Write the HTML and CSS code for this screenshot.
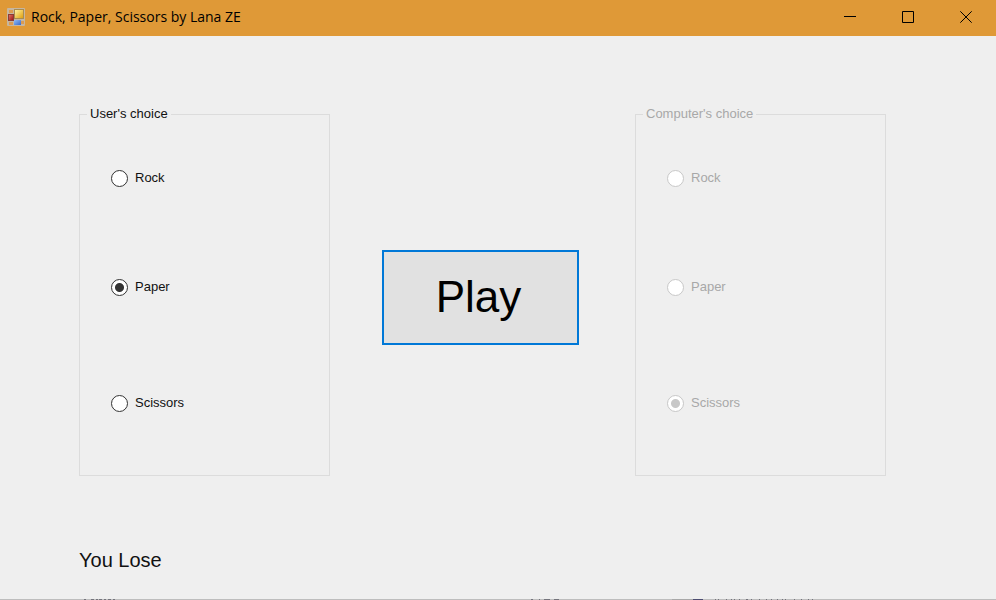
FILE: index.html
```html
<!DOCTYPE html>
<html lang="en">
<head>
<meta charset="utf-8">
<meta name="viewport" content="width=device-width, initial-scale=1">
<title>Rock, Paper, Scissors by Lana ZE</title>
<link rel="stylesheet" href="styles.css">
</head>
<body>
<header class="titlebar">
  <svg class="app-icon" viewBox="0 0 18 18" aria-hidden="true">
    <defs>
      <linearGradient id="gold" x1="0" y1="0" x2="1" y2="1"><stop offset="0" stop-color="#fff3a0"/><stop offset="1" stop-color="#e0a010"/></linearGradient>
      <linearGradient id="red" x1="0" y1="0" x2="1" y2="1"><stop offset="0" stop-color="#e07060"/><stop offset="1" stop-color="#a01818"/></linearGradient>
      <linearGradient id="blue" x1="0" y1="0" x2="1" y2="1"><stop offset="0" stop-color="#90bcf8"/><stop offset="1" stop-color="#3868c8"/></linearGradient>
    </defs>
    <rect width="18" height="18" rx="1" fill="#c6b6a0"/>
    <path d="M2 2h4v3H2zM2 14h4v3H2zM14 13h3v3h-3z" fill="#dc9b50"/>
    <rect x="7" y="1" width="10" height="10" fill="#a88c50"/>
    <rect x="8" y="2" width="8" height="8" fill="url(#gold)"/>
    <rect x="1" y="6" width="6" height="7" fill="#8c3c34"/>
    <rect x="2" y="7" width="4" height="5" fill="url(#red)"/>
    <rect x="7" y="12" width="7" height="5" fill="url(#blue)"/>
  </svg>
  <h1 class="title">Rock, Paper, Scissors by Lana ZE</h1>
  <div class="window-buttons">
    <button class="window-button" type="button" aria-label="Minimize"><svg viewBox="0 0 12 12"><path d="M0 5.5h12"/></svg></button>
    <button class="window-button" type="button" aria-label="Maximize"><svg viewBox="0 0 12 12"><path d="M.5.5h11v11H.5z"/></svg></button>
    <button class="window-button" type="button" aria-label="Close"><svg viewBox="0 0 12 12"><path d="M.3.3l11.4 11.4M11.7.3L.3 11.7"/></svg></button>
  </div>
</header>
<main class="game">
  <form class="board">
    <fieldset class="choices">
      <legend>User's choice</legend>
      <label class="choice"><input type="radio" name="user" value="rock">Rock</label>
      <label class="choice"><input type="radio" name="user" value="paper" checked>Paper</label>
      <label class="choice"><input type="radio" name="user" value="scissors">Scissors</label>
    </fieldset>
    <button class="play" type="button">Play</button>
    <fieldset class="choices" disabled>
      <legend>Computer's choice</legend>
      <label class="choice"><input type="radio" name="computer" value="rock">Rock</label>
      <label class="choice"><input type="radio" name="computer" value="paper">Paper</label>
      <label class="choice"><input type="radio" name="computer" value="scissors" checked>Scissors</label>
    </fieldset>
  </form>
  <p class="result">You Lose</p>
</main>
<footer class="edge">
  <svg viewBox="0 0 996 1" preserveAspectRatio="none" aria-hidden="true">
    <path d="M672 .5h21" stroke="#a8a8a8"/>
    <path d="M693 .5h10" stroke="#4c4c70"/>
    <path d="M84 .5h2m5 0h3m2 0h2m1 0h3m2 0h2m2 0h3m2 0h2M531 .5h2m6 0h1m4 0h6m4 0h5M715 .5h1m2 0h1m7 0h1m4 0h1m2 0h1m4 0h1m6 0h2m3 0h1m7 0h1m6 0h1m4 0h1m5 0h1m4 0h1m2 0h1m8 0h1m6 0h1m6 0h1m3 0h1" stroke="#74747c"/>
  </svg>
</footer>
</body>
</html>
```
FILE: styles.css
```css
* {
  box-sizing: border-box;
}

body {
  margin: 0;
  min-height: 100vh;
  display: flex;
  flex-direction: column;
  background: #efefef;
  color: #111;
  font: 13px/20px "Liberation Sans", Arial, sans-serif;
}

.titlebar {
  display: flex;
  align-items: center;
  height: 36px;
  padding: 0 1px 2px 7px;
  background: #df9937;
  color: #000;
}

.app-icon {
  width: 18px;
  height: 18px;
  margin-right: 6px;
}

.title {
  flex: 1;
  margin: 0;
  font: 14px/20px "Open Sans", "Noto Sans", sans-serif;
}

.window-buttons {
  display: flex;
  align-self: stretch;
}

.window-button {
  display: flex;
  align-items: center;
  justify-content: center;
  width: 58px;
  padding: 0;
  border: 0;
  background: none;
}

.window-button svg {
  width: 12px;
  height: 12px;
  fill: none;
  stroke: #000;
}

.game {
  flex: 1;
  padding: 68px 110px 0 79px;
}

.board {
  display: grid;
  grid-template-columns: 251fr 52fr 197fr 56fr 251fr;
}

.choices {
  grid-column: 1;
  min-width: 0;
  margin: 0;
  padding: 44px 31px 62px;
  border: 1px solid #dcdcdc;
  display: flex;
  flex-direction: column;
  gap: 89px;
}

.choices:disabled {
  grid-column: 5;
  color: #a8a8a8;
}

.choices legend {
  margin-left: -24px;
  padding: 0 3px;
}

.choice {
  display: flex;
  align-items: center;
  gap: 7px;
}

.choice:last-child {
  margin-top: 7px;
}

.choice input {
  appearance: none;
  width: 17px;
  height: 17px;
  margin: 0;
  border: 1px solid #333;
  border-radius: 50%;
  background: #fff;
}

.choice input:checked {
  background: radial-gradient(circle, #333 4px, #fff 5px);
}

.choice input:disabled {
  border-color: #c8c8c8;
}

.choice input:disabled:checked {
  background: radial-gradient(circle, #c8c8c8 4px, #fff 5px);
}

.play {
  grid-column: 3;
  align-self: center;
  height: 95px;
  margin-top: 14px;
  padding: 0 4px 0 0;
  border: 2px solid #0078d7;
  background: #e1e1e1;
  color: #000;
  font: 44px/52px "Liberation Sans", Arial, sans-serif;
}

.result {
  margin: 72px 0 0;
  font-size: 20px;
  line-height: 24px;
}

.edge {
  height: 1px;
  background: #bdbdbd;
}

.edge svg {
  display: block;
  width: 100%;
  height: 1px;
}
```
